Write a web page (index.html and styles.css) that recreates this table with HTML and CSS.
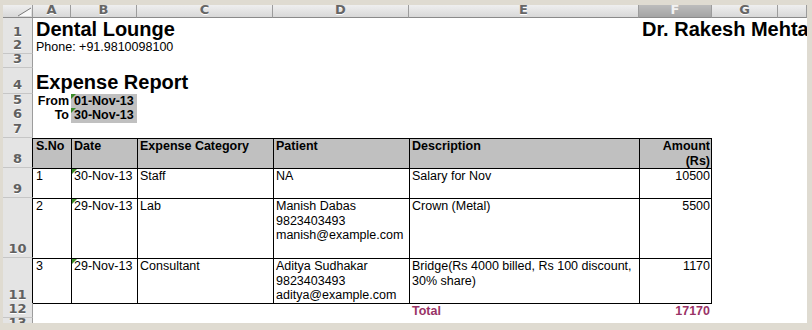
FILE: index.html
```html
<!DOCTYPE html>
<html lang="en">
<head>
<meta charset="utf-8">
<title>Expense Report</title>
<link rel="stylesheet" href="styles.css">
</head>
<body>
<div class="sheet">
  <div class="row colhead">
    <div class="corner"><svg width="29" height="12" viewBox="0 0 29 12"><polygon points="15,11 28,3 28,11" fill="#f8f8f8"/><line x1="15" y1="11" x2="28" y2="3" stroke="#7a7a7a" stroke-width="1"/></svg></div>
    <div class="ch">A</div>
    <div class="ch">B</div>
    <div class="ch">C</div>
    <div class="ch">D</div>
    <div class="ch">E</div>
    <div class="ch sel">F</div>
    <div class="ch">G</div>
    <div class="ch"></div>
  </div>
  <div class="row h21">
    <div class="rh">1</div>
    <div class="c title cA">Dental Lounge</div>
    <div class="c title cF">Dr. Rakesh Mehta</div>
  </div>
  <div class="row h15">
    <div class="rh">2</div>
    <div class="c cA">Phone: +91.9810098100</div>
  </div>
  <div class="row h14"><div class="rh">3</div></div>
  <div class="row h26">
    <div class="rh">4</div>
    <div class="c title cA">Expense Report</div>
  </div>
  <div class="row h14">
    <div class="rh">5</div>
    <div class="c b right cA">From</div>
    <div class="c b shade flag cB">01-Nov-13</div>
  </div>
  <div class="row h14">
    <div class="rh">6</div>
    <div class="c b right cA">To</div>
    <div class="c b shade flag cB">30-Nov-13</div>
  </div>
  <div class="row h16"><div class="rh">7</div></div>
  <div class="row h30 trow thead">
    <div class="rh">8</div>
    <div class="t">S.No</div>
    <div class="t">Date</div>
    <div class="t">Expense Category</div>
    <div class="t">Patient</div>
    <div class="t">Description</div>
    <div class="t num">Amount (Rs)</div>
  </div>
  <div class="row h30 trow">
    <div class="rh">9</div>
    <div class="t">1</div>
    <div class="t flag">30-Nov-13</div>
    <div class="t">Staff</div>
    <div class="t">NA</div>
    <div class="t">Salary for Nov</div>
    <div class="t num">10500</div>
  </div>
  <div class="row h60 trow">
    <div class="rh">10</div>
    <div class="t">2</div>
    <div class="t flag">29-Nov-13</div>
    <div class="t">Lab</div>
    <div class="t">Manish Dabas<br>9823403493<br>manish@example.com</div>
    <div class="t">Crown (Metal)</div>
    <div class="t num">5500</div>
  </div>
  <div class="row h45 trow tlast">
    <div class="rh">11</div>
    <div class="t">3</div>
    <div class="t flag">29-Nov-13</div>
    <div class="t">Consultant</div>
    <div class="t">Aditya Sudhakar<br>9823403493<br>aditya@example.com</div>
    <div class="t">Bridge(Rs 4000 billed, Rs 100 discount, 30% share)</div>
    <div class="t num">1170</div>
  </div>
  <div class="row h15">
    <div class="rh">12</div>
    <div class="c b total cE">Total</div>
    <div class="c b total right cF">17170</div>
  </div>
  <div class="row h14"><div class="rh">13</div></div>
</div>
</body>
</html>
```
FILE: styles.css
```css
* { box-sizing: border-box; }
html, body { margin: 0; padding: 0; }
body {
  width: 812px;
  height: 330px;
  overflow: hidden;
  background: #dfdbd1;
  font-family: "Liberation Sans", Arial, sans-serif;
  color: #000;
}
.sheet {
  margin: 5px 5px 0 3px;
  height: 318px;
  background: #fff;
  overflow: hidden;
}
.row {
  display: grid;
  grid-template-columns: 30px 38px 66px 136px 136px 230px 73px 66px 29px;
}
.colhead { height: 13px; }
.h14 { height: 14px; }
.h15 { height: 15px; }
.h16 { height: 16px; }
.h21 { height: 21px; }
.h26 { height: 26px; }
.h30 { height: 30px; }
.h45 { height: 45px; }
.h60 { height: 60px; }

.corner, .ch {
  background: linear-gradient(#efefef, #d8d8d8);
  border-right: 1px solid #9c9c9c;
  border-bottom: 1px solid #8a8a8a;
  overflow: hidden;
}
.corner svg { display: block; }
.ch {
  font: bold 13px/9px "DejaVu Sans", sans-serif;
  color: #666;
  text-align: center;
  text-shadow: 0 1px 0 #fff;
}
.ch.sel {
  background: linear-gradient(#bcbcbc, #a4a4a4);
  color: #f2f2f2;
  text-shadow: none;
}

.rh {
  grid-column: 1;
  background: #e4e4e4;
  border-right: 1px solid #9c9c9c;
  border-bottom: 1px solid #c6c6c6;
  display: flex;
  align-items: flex-end;
  justify-content: center;
  padding-bottom: 2px;
  font: bold 13px/13px "DejaVu Sans", sans-serif;
  color: #606060;
  text-shadow: 0 1px 0 #fff;
  overflow: hidden;
}
.trow .rh { border-right-color: #000; }

.cA { grid-column: 2; }
.cB { grid-column: 3; }
.cE { grid-column: 6; }
.cF { grid-column: 7; }

.c {
  display: flex;
  align-items: flex-end;
  min-width: 0;
  padding: 0 2px 0 3px;
  font-size: 12.5px;
  line-height: 14.5px;
  white-space: nowrap;
}
.c.title {
  font-size: 20px;
  font-weight: bold;
  line-height: 23px;
}
.c.b { font-weight: bold; }
.c.right { justify-content: flex-end; }
.c.shade { background: #c0c0c0; }
.c.total { color: #993366; }

.t {
  min-width: 0;
  border-top: 1px solid #000;
  padding: 0 2px 0 3px;
  font-size: 12.5px;
  line-height: 14.5px;
}
.t + .t {
  border-left: 1px solid #000;
  padding-left: 2px;
}
.t.num {
  text-align: right;
  padding-right: 1px;
  border-right: 1px solid #000;
}
.thead .t {
  background: #c0c0c0;
  font-weight: bold;
}
.tlast .t { border-bottom: 1px solid #000; }
.tlast .rh { border-bottom-color: #000; }

.flag { position: relative; }
.flag::before {
  content: "";
  position: absolute;
  left: 0;
  top: 0;
  border-style: solid;
  border-width: 5px 5px 0 0;
  border-color: #3b8d2a transparent transparent transparent;
}
```
